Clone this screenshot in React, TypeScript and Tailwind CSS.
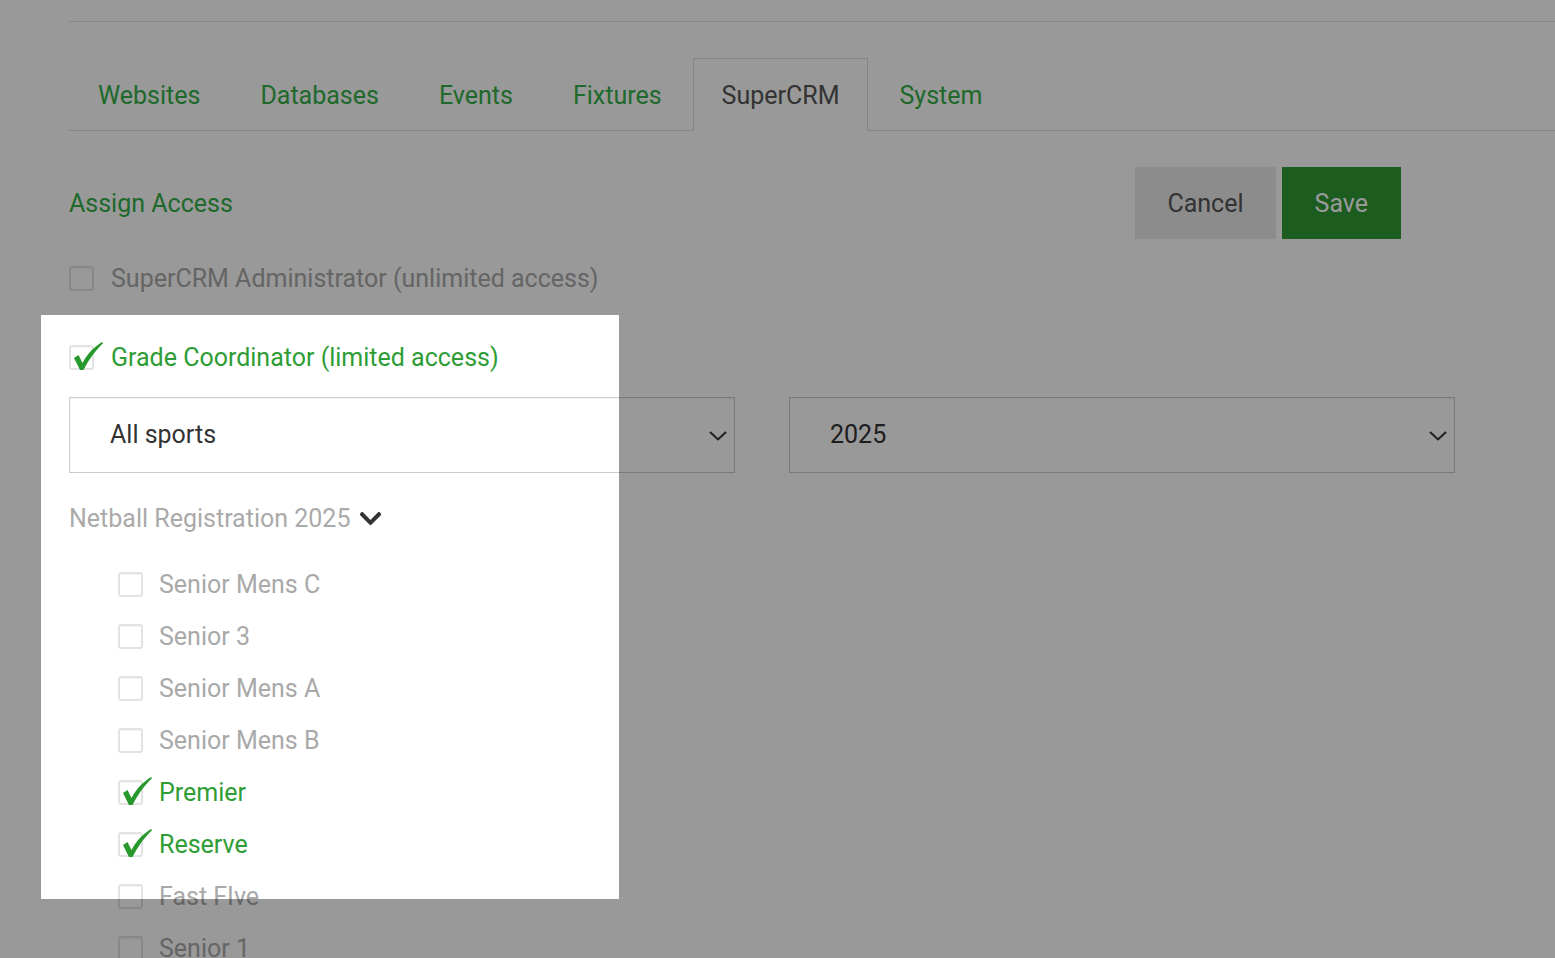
import { FaChevronDown } from "react-icons/fa";

type Grade = { name: string; checked: boolean };

const grades: Grade[] = [
  { name: "Senior Mens C", checked: false },
  { name: "Senior 3", checked: false },
  { name: "Senior Mens A", checked: false },
  { name: "Senior Mens B", checked: false },
  { name: "Premier", checked: true },
  { name: "Reserve", checked: true },
  { name: "Fast FIve", checked: false },
  { name: "Senior 1", checked: false },
];

const tabs = ["Websites", "Databases", "Events", "Fixtures", "SuperCRM", "System"];

const Tick = () => (
  <svg
    className="absolute left-0 top-[-6px] w-[34px] h-[32px] pointer-events-none"
    viewBox="0 0 34 32"
  >
    <path
      d="M3 17 L7.5 14 L11.5 22 C16 13 23 6 31 1 L32 2.2 C24.5 9.5 18 18 12.5 29 L9 29 Z"
      fill="#27992c"
    />
  </svg>
);

const Checkbox = ({ checked }: { checked: boolean }) => (
  <span className="relative shrink-0 w-[25px] h-[25px] rounded-[3px] border-2 border-[#e3e3e3] bg-white shadow-[inset_0_1px_1px_rgba(0,0,0,0.04)]">
    {checked && <Tick />}
  </span>
);

const SelectBox = ({ value }: { value: string }) => (
  <div className="w-[666px] h-[76px] border border-[#cccccc] bg-white flex items-center justify-between pl-10 pr-[7px] shadow-[inset_0_1px_2px_rgba(0,0,0,0.05)]">
    <span className="text-[25px] text-[#333]">{value}</span>
    <svg width="18" height="14" viewBox="0 0 18 14" className="text-[#333]">
      <polyline points="1,4 9,11.5 17,4" fill="none" stroke="currentColor" strokeWidth="2" />
    </svg>
  </div>
);

export default function App() {
  return (
    <div className="relative h-[958px] overflow-hidden bg-white font-['Roboto',sans-serif]">
      <div className="pl-[69px] pt-[21px]">
        <div className="border-t border-[#e0e0e0]" />

        {/* tab bar */}
        <ul className="mt-[36px] flex border-b border-[#dddddd]">
          {tabs.map((t) => {
            const active = t === "SuperCRM";
            return (
              <li key={t} className="mb-[-1px] mr-[2px]">
                <a
                  className={
                    active
                      ? "h-[73px] pt-[2px] px-[28px] flex items-center border border-[#dddddd] border-b-white bg-white text-[25px] text-[#555]"
                      : "h-[73px] pt-[2px] px-[28px] flex items-center border border-transparent text-[25px] text-[#33b048]"
                  }
                >
                  {t}
                </a>
              </li>
            );
          })}
        </ul>

        {/* heading + actions */}
        <div className="mt-[36px] w-[1332px] h-[72px] flex items-center justify-between">
          <h2 className="pt-[2px] text-[25px] text-[#33b048]">Assign Access</h2>
          <div className="flex gap-[6px]">
            <button className="h-[72px] pt-[2px] px-8 bg-[#e9e9e9] text-[25px] text-[#555]">Cancel</button>
            <button className="h-[72px] pt-[2px] px-[33px] bg-[#2f9a33] text-[25px] text-white">Save</button>
          </div>
        </div>

        <label className="mt-[25px] h-[28px] flex items-center gap-[17px]">
          <Checkbox checked={false} />
          <span className="pt-[2px] text-[25px] text-[#a9a9a9]">SuperCRM Administrator (unlimited access)</span>
        </label>

        <label className="mt-[51px] h-[28px] flex items-center gap-[17px]">
          <Checkbox checked />
          <span className="pt-[2px] text-[25px] text-[#2e9d35]">Grade Coordinator (limited access)</span>
        </label>

        <div className="mt-[26px] flex gap-[54px]">
          <SelectBox value="All sports" />
          <SelectBox value="2025" />
        </div>

        <div className="mt-[31px] h-[28px] flex items-center gap-[8px]">
          <span className="pt-[2px] text-[25px] text-[#aaaaaa]">Netball Registration 2025</span>
          <FaChevronDown size={25} className="text-[#333]" />
        </div>

        {/* grade list */}
        <div className="mt-[38px] pl-[49px] flex flex-col gap-[24px]">
          {grades.map((g) => (
            <label key={g.name} className="h-[28px] flex items-center gap-[16px]">
              <Checkbox checked={g.checked} />
              <span className={g.checked ? "pt-[2px] text-[25px] text-[#2e9d35]" : "pt-[2px] text-[25px] text-[#a9a9a9]"}>
                {g.name}
              </span>
            </label>
          ))}
        </div>
      </div>

      {/* guided-tour spotlight */}
      <div className="absolute left-[41px] top-[315px] w-[578px] h-[584px] pointer-events-none shadow-[0_0_0_9999px_rgba(0,0,0,0.4)]" />
    </div>
  );
}
